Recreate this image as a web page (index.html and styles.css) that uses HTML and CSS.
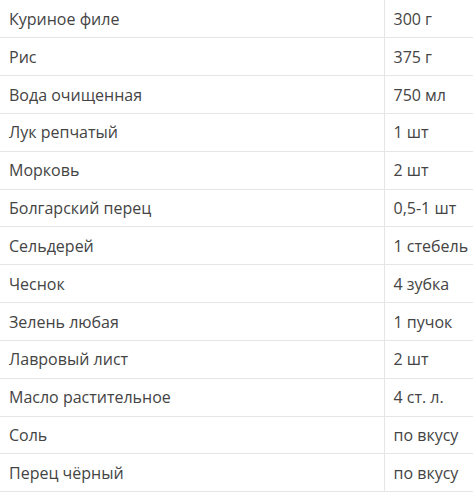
FILE: index.html
```html
<!DOCTYPE html>
<html lang="ru">
<head>
<meta charset="utf-8">
<link rel="stylesheet" href="styles.css">
</head>
<body>
<table class="ingredients">
<colgroup><col class="col-name"><col class="col-qty"></colgroup>
<tbody>
<tr><td class="name">Куриное филе</td><td class="qty">300 г</td></tr>
<tr><td class="name">Рис</td><td class="qty">375 г</td></tr>
<tr><td class="name">Вода очищенная</td><td class="qty">750 мл</td></tr>
<tr><td class="name">Лук репчатый</td><td class="qty">1 шт</td></tr>
<tr><td class="name">Морковь</td><td class="qty">2 шт</td></tr>
<tr><td class="name">Болгарский перец</td><td class="qty">0,5-1 шт</td></tr>
<tr><td class="name">Сельдерей</td><td class="qty">1 стебель</td></tr>
<tr><td class="name">Чеснок</td><td class="qty">4 зубка</td></tr>
<tr><td class="name">Зелень любая</td><td class="qty">1 пучок</td></tr>
<tr><td class="name">Лавровый лист</td><td class="qty">2 шт</td></tr>
<tr><td class="name">Масло растительное</td><td class="qty">4 ст. л.</td></tr>
<tr><td class="name">Соль</td><td class="qty">по вкусу</td></tr>
<tr><td class="name">Перец чёрный</td><td class="qty">по вкусу</td></tr>
</tbody>
</table>
</body>
</html>
```
FILE: styles.css
```css
html, body {
  margin: 0;
  padding: 0;
  background: #fff;
}
.ingredients {
  border-collapse: collapse;
  table-layout: fixed;
  width: 473px;
  font-family: "Open Sans", "Liberation Sans", sans-serif;
  font-size: 16px;
  color: #444;
}
.col-name {
  width: 384px;
}
.col-qty {
  width: 89px;
}
.ingredients td {
  height: 37.83px;
  padding: 0 9px;
  border-bottom: 1px solid #e6e6e6;
  vertical-align: middle;
  box-sizing: border-box;
  white-space: nowrap;
  overflow: visible;
}
.ingredients .name {
  border-right: 1px solid #e6e6e6;
}
.ingredients .qty {
  padding-left: 9px;
  padding-right: 0;
}
```
